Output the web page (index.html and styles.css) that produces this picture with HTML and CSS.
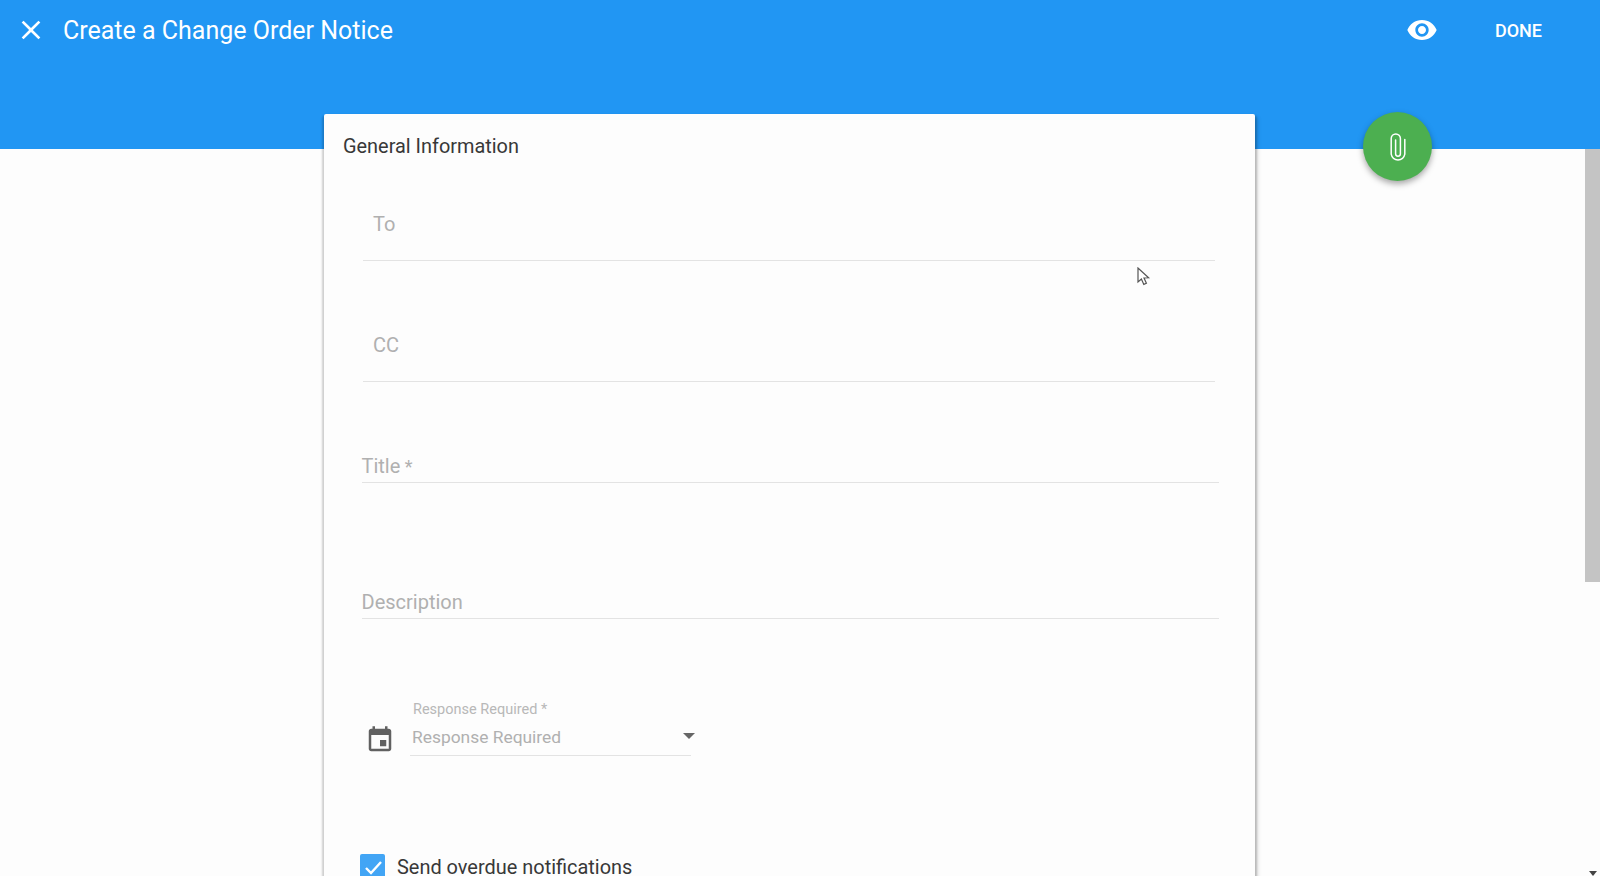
FILE: index.html
```html
<!DOCTYPE html>
<html lang="en">
<head>
<meta charset="utf-8">
<title>Create a Change Order Notice</title>
<link rel="stylesheet" href="styles.css">
</head>
<body>
<div class="page">
  <header class="topbar">
    <button class="close" aria-label="Close">
      <svg viewBox="0 0 24 24" width="32" height="32"><path fill="#fff" d="M19 6.41 17.59 5 12 10.59 6.41 5 5 6.41 10.59 12 5 17.59 6.41 19 12 13.41 17.59 19 19 17.59 13.41 12z"/></svg>
    </button>
    <h1 class="title">Create a Change Order Notice</h1>
    <svg class="eye" viewBox="0 0 24 24" width="32" height="32"><path fill="#fff" d="M12 4.5C7 4.5 2.73 7.61 1 12c1.73 4.39 6 7.5 11 7.5s9.27-3.11 11-7.5c-1.73-4.39-6-7.5-11-7.5zM12 17c-2.76 0-5-2.24-5-5s2.24-5 5-5 5 2.24 5 5-2.24 5-5 5zm0-8c-1.66 0-3 1.34-3 3s1.34 3 3 3 3-1.34 3-3-1.34-3-3-3z"/></svg>
    <span class="done">DONE</span>
  </header>
  <main class="content">
    <section class="card">
      <h2 class="card-title">General Information</h2>
      <div class="chip-field"><span class="ph">To</span></div>
      <div class="chip-field second"><span class="ph">CC</span></div>
      <div class="text-field title-field"><span class="ph">Title<span class="req"> *</span></span></div>
      <div class="text-field desc-field"><span class="ph">Description</span></div>
      <div class="select-row">
        <svg class="cal" viewBox="0 0 24 24" width="30" height="30"><path fill="#616161" d="M17 12h-5v5h5v-5zM16 1v2H8V1H6v2H5c-1.11 0-1.99.9-1.99 2L3 19c0 1.1.89 2 2 2h14c1.1 0 2-.9 2-2V5c0-1.1-.9-2-2-2h-1V1h-2zm3 18H5V8h14v11z"/></svg>
        <div class="select">
          <span class="select-label">Response Required *</span>
          <div class="select-value"><span class="ph">Response Required</span><i class="caret"></i></div>
        </div>
      </div>
      <label class="check-row">
        <span class="box"><svg viewBox="0 0 24 24" width="24" height="24"><path fill="none" stroke="#fff" stroke-width="2.4" d="M5 13l5 5 10-11"/></svg></span>
        <span class="check-text">Send overdue notifications</span>
      </label>
    </section>
    <div class="scrollbar"><div class="thumb"></div><i class="arrow"></i></div>
  </main>
  <button class="fab" aria-label="Attach">
    <svg viewBox="0 0 18 30" width="18" height="30"><path fill="none" stroke="#fff" stroke-width="1.5" stroke-linecap="round" d="M15.8 7.5v14.7a6.9 6.9 0 0 1-13.6 0V6.5a4.6 4.6 0 0 1 9.2 0v15.3a2.4 2.4 0 0 1-4.8 0V8"/></svg>
  </button>
  <svg class="pointer" viewBox="0 0 14 20" width="14" height="20"><path fill="#fff" stroke="#555" stroke-width="1.2" d="M1 1v14l3.4-3 2.4 5.4 2.6-1.2-2.4-5.2 4.6-.2z"/></svg>
</div>
</body>
</html>
```
FILE: styles.css
```css
* { box-sizing: border-box; }
html, body { margin: 0; height: 100%; overflow: hidden; }
body { font-family: Roboto, "Liberation Sans", sans-serif; background: #fdfdfd; color: #333; }
.page { position: relative; height: 876px; display: flex; flex-direction: column; overflow: hidden; }
.topbar { height: 149px; flex: none; background: #2196f3; color: #fff; display: flex; align-items: flex-start; padding: 14px 58px 0 15px; }
.close { width: 32px; height: 32px; padding: 0; border: 0; background: none; display: block; }
.title { margin: 1px 0 0 16px; font-size: 25px; line-height: 32px; font-weight: 400; flex: 1; }
.done { margin: 1px 0 0 57px; font-size: 18px; line-height: 32px; font-weight: 500; }
.content { flex: 1; min-height: 0; display: flex; justify-content: space-between; padding-left: 324px; }
.card { width: 931px; height: 800px; margin-top: -35px; background: #fdfdfd; border-radius: 2px; box-shadow: 0 3px 2px 2px rgba(0,0,0,.18), 3px 3px 4px rgba(0,0,0,.12); padding: 20px 39px 0 19px; position: relative; }
.card-title { margin: 0; font-size: 19.9px; line-height: 26px; font-weight: 400; color: #383838; }
.ph { color: #b0b0b0; font-size: 20px; }
.req { font-size: 18px; }
.chip-field { height: 101px; margin: 0 1px 0 20px; padding: 51px 0 0 10px; line-height: 26px; border-bottom: 1px solid #e3e3e3; }
.chip-field.second { margin-top: 33px; height: 88px; padding-top: 38px; }
.text-field { margin: 0 -3px 0 18.5px; line-height: 26px; border-bottom: 1px solid #e3e3e3; height: 34px; }
.title-field { margin-top: 67px; padding-top: 4px; }
.desc-field { margin-top: 102px; padding-top: 4px; }
.select-row { display: flex; align-items: flex-start; margin: 82px 0 0 22px; }
.cal { margin-top: 24px; flex: none; }
.select { width: 281px; margin-left: 15px; }
.select-label { display: block; font-size: 14.5px; line-height: 18px; color: #b8b8b8; padding-left: 3px; }
.select-value { height: 34px; line-height: 30px; margin-top: 3px; padding: 0 2px; border-bottom: 1px solid #e3e3e3; display: flex; justify-content: space-between; }
.select-value .ph { font-size: 17.4px; }
.caret { width: 0; height: 0; border: 6px solid transparent; border-top: 6px solid #666; border-bottom: 0; margin: 11px -6px 0 0; }
.check-row { display: flex; align-items: flex-start; margin: 98px 0 0 17px; }
.box { width: 25px; height: 25px; background: #42a5f5; border-radius: 2px; display: flex; align-items: center; justify-content: center; }
.check-text { margin: 0 0 0 12px; font-size: 19.95px; line-height: 26px; color: #383838; }
.scrollbar { width: 15px; position: relative; flex: none; }
.thumb { height: 433px; background: #c4c4c4; }
.arrow { position: absolute; right: 3px; bottom: 0; width: 0; height: 0; border: 4.5px solid transparent; border-top: 5px solid #444; border-bottom: 0; }
.fab { position: absolute; left: 1363px; top: 112px; width: 69px; height: 69px; border: 0; padding: 0; border-radius: 50%; background: #4caf50; box-shadow: 0 3px 6px rgba(0,0,0,.35); display: flex; align-items: center; justify-content: center; }
.pointer { position: absolute; left: 1137px; top: 267px; }
```
